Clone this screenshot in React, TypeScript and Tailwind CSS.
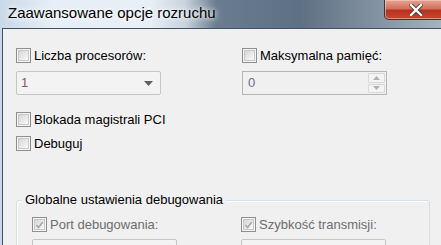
import type { ReactNode } from 'react';

const font = { fontFamily: '"Liberation Sans", Arial, sans-serif' };

function Checkbox({ checked = false }: { checked?: boolean }) {
  return (
    <span className="flex h-[15px] w-[15px] shrink-0 items-center justify-center border border-[#8f8f8f] bg-[#f4f4f4]">
      <span className="flex h-[11px] w-[11px] items-center justify-center border border-[#c8c8c8] bg-gradient-to-br from-[#d6d6d6] to-[#fbfbfb]">
        {checked && (
          <svg width="10" height="10" viewBox="0 0 10 10">
            <path d="M1.5 5.2 L4 7.8 L8.6 1.6" fill="none" stroke="#a8a8a8" strokeWidth="1.8" />
          </svg>
        )}
      </span>
    </span>
  );
}

function CheckRow({ label, checked, disabled }: { label: string; checked?: boolean; disabled?: boolean }) {
  return (
    <div className="flex h-[15px] items-center gap-[3px]">
      <Checkbox checked={checked} />
      <span className={`text-[13px] leading-none ${disabled ? 'text-[#6d6d6d]' : 'text-black'}`}>{label}</span>
    </div>
  );
}

function Dropdown({ value }: { value: string }) {
  return (
    <div className="flex h-[24px] w-[145px] items-center justify-between rounded-[2px] border border-[#c5c5c5] bg-[#f3f3f3] pl-[4px] pr-[7px]">
      <span className="text-[13px] text-[#7a5a5a]">{value}</span>
      <svg width="9" height="5" viewBox="0 0 9 5">
        <path d="M0 0 H9 L4.5 5 Z" fill="#5f5f5f" />
      </svg>
    </div>
  );
}

function SpinBox({ value }: { value: string }) {
  return (
    <div className="flex h-[24px] w-[145px] items-stretch border border-[#b5b5b5] bg-[#f0f0f0]">
      <span className="flex flex-1 items-center pl-[5px] text-[13px] text-[#6a6a8a]">{value}</span>
      <div className="flex w-[19px] flex-col gap-[1px] p-[1px]">
        <div className="flex flex-1 items-center justify-center rounded-[1px] border border-[#d8d8d8] bg-[#f4f4f4]">
          <svg width="7" height="4" viewBox="0 0 7 4">
            <path d="M0 4 H7 L3.5 0 Z" fill="#b0b0b0" />
          </svg>
        </div>
        <div className="flex flex-1 items-center justify-center rounded-[1px] border border-[#d8d8d8] bg-[#f4f4f4]">
          <svg width="7" height="4" viewBox="0 0 7 4">
            <path d="M0 0 H7 L3.5 4 Z" fill="#b0b0b0" />
          </svg>
        </div>
      </div>
    </div>
  );
}

function GroupBox({ title, children }: { title: string; children: ReactNode }) {
  return (
    <div className="relative mr-[11px] mt-[49px] rounded-[3px] border border-[#d5dfe5] shadow-[inset_1px_1px_0_#ffffff]">
      <span className="absolute left-[5px] top-[-9px] bg-[#f0f0f0] px-[3px] text-[13px] leading-[16px] text-black">
        {title}
      </span>
      {children}
    </div>
  );
}

export default function App() {
  return (
    <div
      style={font}
      className="flex h-[245px] w-[441px] flex-col overflow-hidden bg-[linear-gradient(90deg,#c9d8e8_0%,#e6eef7_12%,#e8eff7_34%,#c8d3de_42%,#6a7c8f_49%,#5e7083_68%,#8393a3_86%,#a6b3c0_100%)]"
    >
      <div className="flex h-[28px] shrink-0 items-start justify-between">
        <span className="pl-[8px] pt-[4px] text-[15px] leading-[18px] text-black [text-shadow:0_0_8px_#ffffff,0_0_4px_#ffffff]">
          Zaawansowane opcje rozruchu
        </span>
        <div className="mr-[-6px] flex h-[20px] w-[63px] items-center justify-center rounded-bl-[5px] border border-t-0 border-[#5b2a22] bg-[linear-gradient(180deg,#e9a493_0%,#d4705c_45%,#b8321d_55%,#c9472d_100%)] shadow-[inset_0_0_0_1px_rgba(255,220,210,0.5)]">
          <svg width="14" height="12" viewBox="0 0 14 12">
            <path d="M2 1 L12 11 M12 1 L2 11" stroke="#3a3a3a" strokeWidth="4" strokeLinecap="square" />
            <path d="M2 1 L12 11 M12 1 L2 11" stroke="#ffffff" strokeWidth="2.4" strokeLinecap="square" />
          </svg>
        </div>
      </div>
      <div className="ml-[2px] flex-1 border-l border-t border-[#44515f] bg-[#f0f0f0] pl-[13px] pt-[19px]">
        <div className="grid grid-cols-[226px_1fr]">
          <div className="flex flex-col gap-[8px]">
            <CheckRow label="Liczba procesorów:" />
            <Dropdown value="1" />
          </div>
          <div className="flex flex-col gap-[8px]">
            <CheckRow label="Maksymalna pamięć:" />
            <SpinBox value="0" />
          </div>
        </div>
        <div className="mt-[17px] flex flex-col gap-[9px]">
          <CheckRow label="Blokada magistrali PCI" />
          <CheckRow label="Debuguj" />
        </div>
        <GroupBox title="Globalne ustawienia debugowania">
          <div className="grid grid-cols-[209px_1fr] pl-[15px] pt-[16px]">
            <div className="flex flex-col gap-[7px]">
              <CheckRow label="Port debugowania:" checked disabled />
              <div className="h-[24px] w-[145px] rounded-[2px] border border-[#c5c5c5] bg-[#f3f3f3]" />
            </div>
            <div className="flex flex-col gap-[7px]">
              <CheckRow label="Szybkość transmisji:" checked disabled />
              <div className="h-[24px] w-[145px] rounded-[2px] border border-[#c5c5c5] bg-[#f3f3f3]" />
            </div>
          </div>
        </GroupBox>
      </div>
    </div>
  );
}
